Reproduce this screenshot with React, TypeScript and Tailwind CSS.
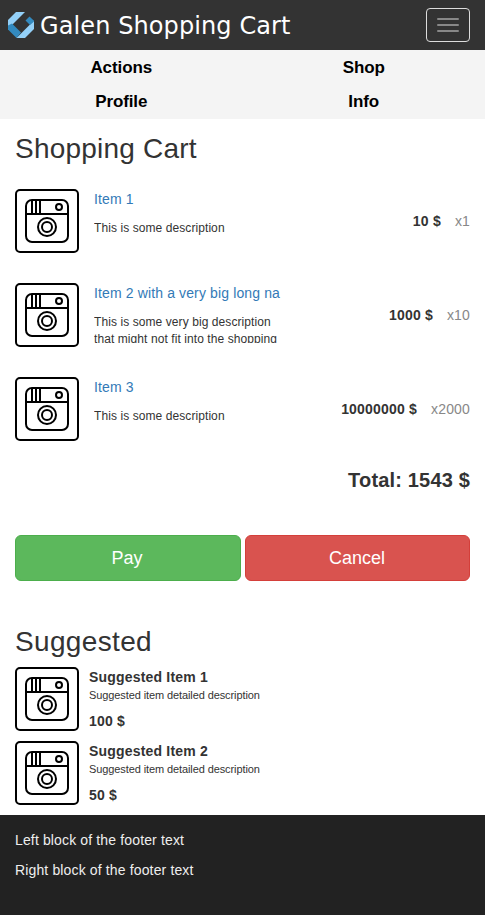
const cartItems = [
  { name: 'Item 1', description: 'This is some description', price: '10 $', count: 'x1' },
  {
    name: 'Item 2 with a very big long na',
    description: 'This is some very big description that might not fit into the shopping',
    price: '1000 $',
    count: 'x10',
  },
  { name: 'Item 3', description: 'This is some description', price: '10000000 $', count: 'x2000' },
];

const suggestedItems = [
  { name: 'Suggested Item 1', price: '100 $' },
  { name: 'Suggested Item 2', price: '50 $' },
];

function Logo() {
  return (
    <svg width="26" height="26" viewBox="0 0 26 26" className="shrink-0">
      <path d="M8 0H17L4.5 12.5L0 16V8Z" fill="#93d0f8" />
      <path d="M0 13.5L4 11.5L13 20.5L8.5 26L0 17.5Z" fill="#338abf" />
      <path d="M8.5 26H17L26 17V8.5Z" fill="#93d0f8" />
      <path d="M17.5 8.5L21.5 4.5L26 8.8V9.5L22 13Z" fill="#338abf" />
    </svg>
  );
}

function CameraIcon() {
  return (
    <svg width="64" height="64" viewBox="0 0 64 64" fill="none" stroke="#000" strokeWidth="2" className="block shrink-0">
      <rect x="1" y="1" width="62" height="62" rx="4" />
      <rect x="11" y="11" width="42" height="42" rx="6" />
      <path d="M11 25H53M17 11V25M21 11V25M25 11V25" />
      <circle cx="44" cy="18" r="3" />
      <circle cx="32" cy="38" r="9" />
      <circle cx="32" cy="38" r="5" />
    </svg>
  );
}

export default function App() {
  return (
    <div className="flex h-[915px] w-full flex-col bg-white font-['Liberation_Sans',Arial,sans-serif] text-sm leading-5 text-[#333]">
      <header className="flex h-[50px] shrink-0 items-center justify-between bg-[#333] pr-[15px] pl-2">
        <div className="flex items-center">
          <Logo />
          <span className="ml-1.5 pt-0.5 font-['DejaVu_Sans',sans-serif] text-2xl leading-[30px] tracking-[0.1px] whitespace-nowrap text-white">
            Galen Shopping Cart
          </span>
        </div>
        <button className="flex h-[34px] w-11 flex-col items-center justify-center gap-1 rounded border border-[#ddd]">
          <span className="h-0.5 w-[22px] rounded-[1px] bg-[#888]" />
          <span className="h-0.5 w-[22px] rounded-[1px] bg-[#888]" />
          <span className="h-0.5 w-[22px] rounded-[1px] bg-[#888]" />
        </button>
      </header>

      <nav className="grid h-[69px] shrink-0 grid-cols-2 grid-rows-[34px_34px] bg-[#f4f4f4] text-center text-[17px] leading-[35px] font-bold tracking-[-0.1px] text-black">
        <a>Actions</a>
        <a>Shop</a>
        <a>Profile</a>
        <a>Info</a>
      </nav>

      <main className="flex flex-col px-[15px]">
        <h1 className="mt-[14px] text-[28px] leading-8 tracking-[0.22px]">Shopping Cart</h1>

        <ul className="mt-6 flex flex-col gap-[30px]">
          {cartItems.map((item) => (
            <li key={item.name} className="flex h-16">
              <CameraIcon />
              <div className="ml-[15px] h-[60px] w-[190px] overflow-hidden">
                <a className="block h-5 tracking-[0.13px] whitespace-nowrap text-[#337ab7]">{item.name}</a>
                <p className="mt-[11px] text-xs leading-[17px] tracking-[0.08px]">{item.description}</p>
              </div>
              <div className="ml-auto flex h-16 items-center gap-[14px] whitespace-nowrap">
                <strong className="tracking-[0.2px]">{item.price}</strong>
                <span className="tracking-[0.15px] text-[#888]">{item.count}</span>
              </div>
            </li>
          ))}
        </ul>

        <div className="mt-[28px] text-right text-xl leading-[22px] font-bold tracking-[0.17px]">Total: 1543 $</div>

        <div className="mt-[44px] flex gap-1 text-lg leading-6 text-white">
          <button className="h-[46px] w-[226px] rounded-md border border-[#4cae4c] bg-[#5cb85c] pr-0.5">Pay</button>
          <button className="h-[46px] flex-1 rounded-md border border-[#d43f3a] bg-[#d9534f] pr-px">Cancel</button>
        </div>

        <h2 className="mt-[45px] text-[28px] leading-8 tracking-[0.35px]">Suggested</h2>
        <ul className="mt-[9px] flex flex-col gap-[10px]">
          {suggestedItems.map((item) => (
            <li key={item.name} className="flex h-16">
              <CameraIcon />
              <div className="ml-[10px]">
                <strong className="block tracking-[0.19px]">{item.name}</strong>
                <p className="text-[11px] leading-4 tracking-[-0.1px]">Suggested item detailed description</p>
                <strong className="mt-2 block tracking-[0.19px]">{item.price}</strong>
              </div>
            </li>
          ))}
        </ul>
      </main>

      <footer className="mt-[10px] flex flex-1 flex-col gap-[10px] bg-[#222] px-[15px] pt-[15px] tracking-[0.14px] text-[#eee]">
        <p>Left block of the footer text</p>
        <p>Right block of the footer text</p>
      </footer>
    </div>
  );
}
